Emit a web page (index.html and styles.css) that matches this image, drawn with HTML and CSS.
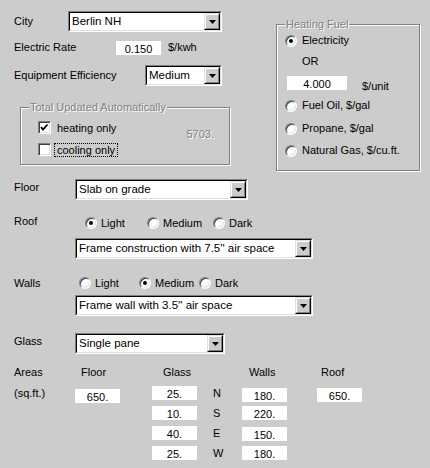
FILE: index.html
```html
<!DOCTYPE html>
<html>
<head>
<meta charset="utf-8">
<title>Heating and Cooling</title>
<link rel="stylesheet" href="styles.css">
</head>
<body>
<div class="dlg">
  <div class="top">
    <div class="left">
      <div class="row r-city">
        <span class="lbl w-city">City</span>
        <div class="combo w-city-combo"><div class="combo-in"><span class="val">Berlin NH</span><span class="btn"><span class="btn-in"><svg class="arr" width="7" height="4" viewBox="0 0 7 4"><polygon points="0,0 7,0 3.5,4" fill="#000"/></svg></span></span></div></div>
      </div>
      <div class="row r-rate">
        <span class="lbl w-rate">Electric Rate</span>
        <span class="field w45">0.150</span>
        <span class="unit u-kwh">$/kwh</span>
      </div>
      <div class="row r-eff">
        <span class="lbl w-eff">Equipment Efficiency</span>
        <div class="combo w-eff-combo"><div class="combo-in"><span class="val">Medium</span><span class="btn"><span class="btn-in"><svg class="arr" width="7" height="4" viewBox="0 0 7 4"><polygon points="0,0 7,0 3.5,4" fill="#000"/></svg></span></span></div></div>
      </div>
      <div class="group g-total">
        <span class="legend">Total Updated Automatically</span>
        <div class="checks">
          <div class="chk"><span class="box"><svg width="11" height="11" viewBox="0 0 11 11"><polyline points="2,5 4,7.5 8.5,2.5" fill="none" stroke="#000" stroke-width="1.8"/></svg></span><span class="chk-txt">heating only</span></div>
          <div class="chk"><span class="box"></span><span class="chk-txt focus">cooling only</span></div>
        </div>
        <span class="total">5703.</span>
      </div>
    </div>
    <div class="group g-fuel">
      <span class="legend">Heating Fuel</span>
      <div class="fuel-row f-elec"><span class="radio on"></span><span class="rtxt">Electricity</span></div>
      <div class="fuel-or">OR</div>
      <div class="fuel-unit"><span class="field w60">4.000</span><span class="unit u-unit">$/unit</span></div>
      <div class="fuel-row f-oil"><span class="radio"></span><span class="rtxt">Fuel Oil, $/gal</span></div>
      <div class="fuel-row f-prop"><span class="radio"></span><span class="rtxt">Propane, $/gal</span></div>
      <div class="fuel-row f-gas"><span class="radio"></span><span class="rtxt">Natural Gas, $/cu.ft.</span></div>
    </div>
  </div>

  <div class="row r-floor">
    <span class="lbl lbl-up w-bot">Floor</span>
    <div class="combo w-floor"><div class="combo-in"><span class="val">Slab on grade</span><span class="btn"><span class="btn-in"><svg class="arr" width="7" height="4" viewBox="0 0 7 4"><polygon points="0,0 7,0 3.5,4" fill="#000"/></svg></span></span></div></div>
  </div>

  <div class="row r-roof-opts">
    <span class="lbl lbl-up w-roof">Roof</span>
    <span class="opt o-roof-light"><span class="radio on"></span><span class="rtxt">Light</span></span>
    <span class="opt o-roof-med"><span class="radio"></span><span class="rtxt">Medium</span></span>
    <span class="opt"><span class="radio"></span><span class="rtxt">Dark</span></span>
  </div>
  <div class="row r-roof-combo">
    <div class="combo w-wide"><div class="combo-in"><span class="val">Frame construction with 7.5'' air space</span><span class="btn"><span class="btn-in"><svg class="arr" width="7" height="4" viewBox="0 0 7 4"><polygon points="0,0 7,0 3.5,4" fill="#000"/></svg></span></span></div></div>
  </div>

  <div class="row r-walls-opts">
    <span class="lbl w-walls">Walls</span>
    <span class="opt o-walls"><span class="radio"></span><span class="rtxt">Light</span></span>
    <span class="opt o-walls"><span class="radio on"></span><span class="rtxt">Medium</span></span>
    <span class="opt"><span class="radio"></span><span class="rtxt">Dark</span></span>
  </div>
  <div class="row r-walls-combo">
    <div class="combo w-wide"><div class="combo-in"><span class="val">Frame wall with 3.5'' air space</span><span class="btn"><span class="btn-in"><svg class="arr" width="7" height="4" viewBox="0 0 7 4"><polygon points="0,0 7,0 3.5,4" fill="#000"/></svg></span></span></div></div>
  </div>

  <div class="row r-glass">
    <span class="lbl lbl-up w-bot">Glass</span>
    <div class="combo w-glass"><div class="combo-in"><span class="val">Single pane</span><span class="btn"><span class="btn-in"><svg class="arr" width="7" height="4" viewBox="0 0 7 4"><polygon points="0,0 7,0 3.5,4" fill="#000"/></svg></span></span></div></div>
  </div>

  <div class="areas">
    <span class="hd c1 r1">Areas</span>
    <span class="hd c2 r1 h-floor">Floor</span>
    <span class="hd c3 r1 h-glass">Glass</span>
    <span class="hd c5 r1 h-walls">Walls</span>
    <span class="hd c6 r1 h-roof">Roof</span>

    <span class="hd c1 r2">(sq.ft.)</span>
    <span class="field w45 c2 r2 dn3">650.</span>

    <span class="field w45 c3 r2">25.</span>
    <span class="field w45 c3 r3">10.</span>
    <span class="field w45 c3 r4">40.</span>
    <span class="field w45 c3 r5">25.</span>

    <span class="dir c4 r2">N</span>
    <span class="dir c4 r3">S</span>
    <span class="dir c4 r4">E</span>
    <span class="dir c4 r5">W</span>

    <span class="field w45 c5 r2 dn2">180.</span>
    <span class="field w45 c5 r3">220.</span>
    <span class="field w45 c5 r4 dn1">150.</span>
    <span class="field w45 c5 r5">180.</span>

    <span class="field w45 c6 r2 dn2">650.</span>
  </div>
</div>
</body>
</html>
```

FILE: styles.css
```css
html, body {
  margin: 0;
  padding: 0;
}
body {
  width: 430px;
  height: 468px;
  overflow: hidden;
  background: #cccccc;
  font-family: "Liberation Sans", Arial, sans-serif;
  font-size: 11px;
  line-height: 13px;
  color: #000;
}
.dlg {
  width: 430px;
  height: 468px;
}

/* ---------- top area ---------- */
.top {
  display: flex;
  align-items: flex-start;
  padding-top: 11px;
  height: 159px;
}
.left {
  width: 276px;
  flex: none;
}
.row {
  display: flex;
  align-items: center;
  padding-left: 14px;
}
.left .row { padding-left: 14px; }
.lbl { flex: none; white-space: nowrap; }
.lbl-up { margin-bottom: 4px; }
.w-city { width: 54px; }
.w-rate { width: 102px; }
.w-eff { width: 131px; }
.w-bot { width: 61px; }
.w-roof { width: 71px; }
.w-walls { width: 65px; }

.r-city { height: 21px; }
.r-rate { height: 15px; margin-top: 8px; }
.r-eff { height: 21px; margin-top: 10px; }

/* ---------- combo box ---------- */
.combo {
  flex: none;
  height: 21px;
  box-sizing: border-box;
  border: 1px solid;
  border-color: #808080 #ffffff #ffffff #808080;
}
.combo-in {
  height: 100%;
  box-sizing: border-box;
  border: 1px solid;
  border-color: #000000 #dfdfdf #dfdfdf #000000;
  background: #fff;
  display: flex;
  align-items: center;
}
.val {
  flex: 1;
  padding-left: 2px;
  white-space: nowrap;
  overflow: hidden;
  font-size: 11.5px;
}
.btn {
  flex: none;
  width: 16px;
  height: 17px;
  box-sizing: border-box;
  border: 1px solid;
  border-color: #dfdfdf #000000 #000000 #dfdfdf;
  background: #cccccc;
}
.btn-in {
  display: flex;
  align-items: center;
  justify-content: center;
  height: 100%;
  box-sizing: border-box;
  border: 1px solid;
  border-color: #ffffff #808080 #808080 #ffffff;
}
.arr { display: block; margin-top: 1px; }
.w-city-combo { width: 154px; }
.w-eff-combo { width: 77px; }
.w-floor { width: 173px; }
.w-wide { width: 238px; }
.w-glass { width: 150px; }

/* ---------- edit fields ---------- */
.field {
  display: block;
  flex: none;
  height: 14px;
  box-sizing: border-box;
  background: #fff;
  text-align: center;
  line-height: 13px;
  padding-top: 2px;
  white-space: nowrap;
}
.w45 { width: 45px; }
.w60 { width: 60px; }
.unit { white-space: nowrap; }
.u-kwh { margin-left: 7px; }
.u-unit { margin-left: 15px; margin-top: 4px; }

/* ---------- group boxes ---------- */
.group {
  position: relative;
  box-sizing: border-box;
  border: 1px solid #808080;
  box-shadow: inset 1px 1px 0 #ffffff, 1px 1px 0 #ffffff;
}
.legend {
  position: absolute;
  top: -7px;
  left: 8px;
  padding: 0 1px;
  background: #cccccc;
  color: #808080;
  text-shadow: 1px 1px 0 #ffffff;
  white-space: nowrap;
  line-height: 13px;
}
.g-total {
  margin-top: 21px;
  margin-left: 20px;
  width: 210px;
  height: 58px;
  padding: 13px 15px 0 17px;
  display: flex;
  align-items: flex-start;
}
.checks {
  display: flex;
  flex-direction: column;
  gap: 9px;
}
.chk {
  display: flex;
  align-items: center;
  height: 13px;
}
.box {
  flex: none;
  width: 13px;
  height: 13px;
  box-sizing: border-box;
  border: 1px solid;
  border-color: #808080 #ffffff #ffffff #808080;
  box-shadow: inset 1px 1px 0 #404040, inset -1px -1px 0 #dfdfdf;
  background: #fff;
}
.box svg { display: block; }
.chk-txt {
  margin-left: 3px;
  padding: 0 2px;
  border: 1px dotted transparent;
  line-height: 12px;
}
.chk-txt.focus { border-color: #000; }
.total {
  margin-left: auto;
  margin-top: 7px;
  color: #808080;
  text-shadow: 1px 1px 0 #ffffff;
}

.g-fuel {
  flex: none;
  margin-top: 13px;
  width: 144px;
  height: 147px;
  padding: 0 0 0 8px;
}
.fuel-row {
  display: flex;
  align-items: center;
  height: 13px;
}
.rtxt { margin-left: 5px; white-space: nowrap; }
.f-elec { margin-top: 9px; }
.fuel-or { margin-top: 8px; padding-left: 17px; height: 13px; }
.fuel-unit {
  display: flex;
  align-items: flex-start;
  margin-top: 8px;
  padding-left: 2px;
  height: 14px;
}
.f-oil { margin-top: 9px; }
.f-prop { margin-top: 10px; }
.f-gas { margin-top: 9px; }

/* ---------- radio ---------- */
.radio {
  position: relative;
  flex: none;
  width: 12px;
  height: 12px;
  box-sizing: border-box;
  border-radius: 50%;
  border: 1px solid;
  border-color: #808080 #ffffff #ffffff #808080;
  box-shadow: inset 1px 1px 0 #404040, inset -1px -1px 0 #dfdfdf;
  background: #fff;
}
.radio.on::after {
  content: "";
  position: absolute;
  left: 3px;
  top: 3px;
  width: 4px;
  height: 4px;
  border-radius: 50%;
  background: #000;
}
.opt {
  display: flex;
  align-items: center;
  flex: none;
}
.opt .rtxt { margin-left: 4px; }
.o-roof-light { width: 62px; }
.o-roof-med { width: 66px; }
.o-walls { width: 60px; }

/* ---------- lower rows ---------- */
.r-floor { height: 21px; margin-top: 9px; }
.r-roof-opts { height: 14px; margin-top: 16px; }
.r-roof-combo { height: 21px; margin-top: 8px; padding-left: 75px; }
.r-walls-opts { height: 14px; margin-top: 17px; }
.r-walls-combo { height: 21px; margin-top: 5px; padding-left: 75px; }
.r-glass { height: 21px; margin-top: 17px; }

/* ---------- areas grid ---------- */
.areas {
  display: grid;
  grid-template-columns: 61px 77px 61px 29px 75px auto;
  grid-template-rows: 15px repeat(4, 14px);
  row-gap: 6px;
  margin-top: 11px;
  padding-left: 14px;
}
.hd { white-space: nowrap; align-self: center; }
.dir { align-self: center; }
.c1 { grid-column: 1; }
.c2 { grid-column: 2; }
.c3 { grid-column: 3; }
.c4 { grid-column: 4; }
.c5 { grid-column: 5; }
.c6 { grid-column: 6; }
.r1 { grid-row: 1; }
.r2 { grid-row: 2; }
.r3 { grid-row: 3; }
.r4 { grid-row: 4; }
.r5 { grid-row: 5; }
.h-floor { padding-left: 6px; }
.h-glass { padding-left: 11px; }
.h-walls { padding-left: 7px; }
.h-roof { padding-left: 4px; }
.dn1 { margin-top: 1px; }
.dn2 { margin-top: 2px; }
.dn3 { margin-top: 3px; }
```
